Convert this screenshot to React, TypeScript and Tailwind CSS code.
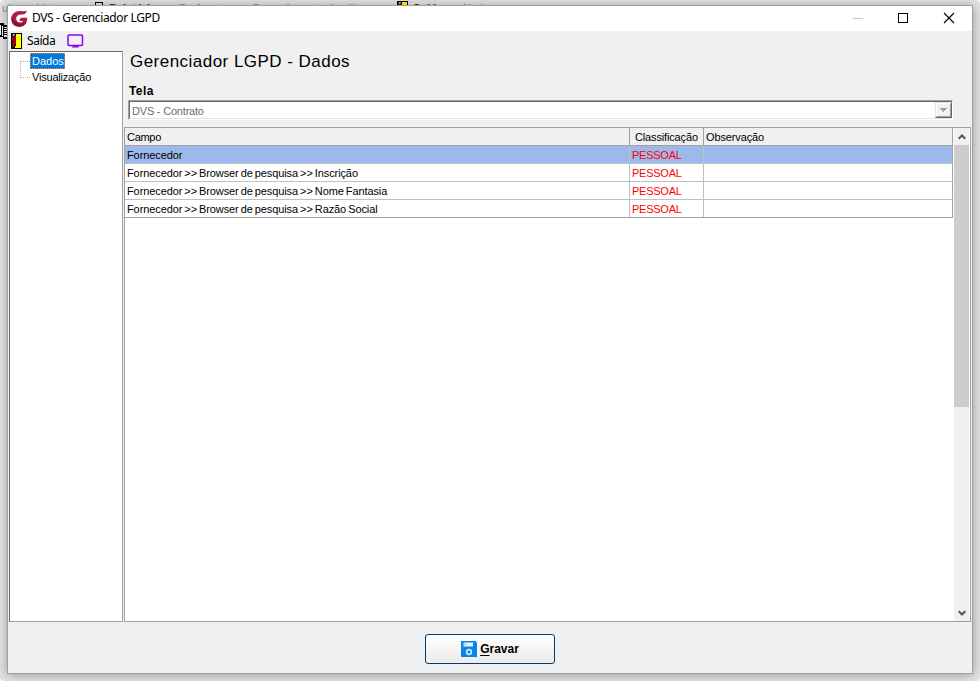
import type { ReactNode } from 'react'

const rows = [
  'Fornecedor',
  'Fornecedor >> Browser de pesquisa >> Inscrição',
  'Fornecedor >> Browser de pesquisa >> Nome Fantasia',
  'Fornecedor >> Browser de pesquisa >> Razão Social',
]

const DoorIcon = ({ className }: { className?: string }) => (
  <svg className={className} width="11" height="16" viewBox="0 0 11 16" shapeRendering="crispEdges">
    <path d="M0 0h11v16H0z" fill="#000" />
    <path d="M5 1h5v14H4v-2h1z" fill="#ff0" />
    <path d="M1 1h3v1h1v9H4v2H3v1H2v1H1z" fill="#8c0010" />
    <path d="M2 1h2v1H3v1H2z" fill="#0ff" />
  </svg>
)

const LogoIcon = () => (
  <svg width="17" height="17" viewBox="0 0 17 17">
    <path
      d="M16 .8C15 4 13 4.600 10.500 4.500 7.500 4.300 5.300 5.800 5.200 8.500c0 2.700 1.800 4 3.700 4 1.500 0 2.500-.6 3-1.600H8.300l1.400-3.200h6.500c.3 5.600-3.200 9-8 9C3.300 16.700.3 13.500.3 9 .3 3.600 4.500.6 9.500.9c2.500.2 4.500.6 6.500-.1z"
      fill="#b11b3c"
    />
    <path d="M.6 6.500C-.4 12.500 3 16.700 8.200 16.700c3.500 0 6-1.700 7.200-4.200C10 15 3.500 13 .6 6.500z" fill="#7f1738" />
  </svg>
)

const MonitorIcon = () => (
  <svg width="17" height="15" viewBox="0 0 17 15">
    <rect x="1" y="1" width="14.500" height="10.500" rx="1" fill="none" stroke="#8c00ff" strokeWidth="1.500" />
    <path d="M6 11.500h5V13H6z" fill="#8c00ff" />
    <path d="M5 13h7" stroke="#8c00ff" />
  </svg>
)

const PagesIcon = () => (
  <svg width="8" height="16" viewBox="0 0 8 16" shapeRendering="crispEdges">
    <path d="M0 0h4v2h3v14H3v-2H0z" fill="#000" />
    <path d="M0 2h1v10H0zM2 3h1v10H2zM4 4h4v1H4zM4 6h4v1H4zM4 8h4v1H4zM4 10h4v1H4zM4 12h4v2H4z" fill="#fff" />
  </svg>
)

const DiskIcon = () => (
  <svg width="16" height="16" viewBox="0 0 16 16">
    <path d="M0 0h14.500L16 2v14H0z" fill="#0883e8" />
    <path d="M2.500 1.500h9.500v4H2.500z" fill="#e8f4ff" />
    <path d="M3.500 2.500h2v2h-2z" fill="#9accf5" />
    <circle cx="8" cy="11" r="2.400" fill="none" stroke="#d2eaff" strokeWidth="1.600" />
  </svg>
)

const Chevron = ({ down }: { down?: boolean }) => (
  <svg width="8" height="6" viewBox="0 0 8 6" className={down ? 'rotate-180' : ''}>
    <path d="M.7 4.800 4 1.500l3.300 3.300" fill="none" stroke="#555" strokeWidth="2" />
  </svg>
)

const Cell = ({ className, children }: { className: string; children?: ReactNode }) => (
  <div className={`h-full shrink-0 whitespace-nowrap pl-[2px] ${className}`}>{children}</div>
)

// menu bar of the parent window, mostly hidden behind the dialog
const Backdrop = () => (
  <div className="absolute inset-x-0 top-0 h-[16px] overflow-hidden text-[11px] leading-[13px] text-[#8c8c8c]">
    <span className="absolute left-[2px] top-[2px]">ultas</span>
    <span className="absolute left-[36px] top-[2px]">Listagens</span>
    <span className="absolute left-[95px] top-[2px] h-3 w-2 border border-black bg-[#eee8d0]" />
    <span className="absolute left-[109px] top-[2px] font-bold text-[#333]">Relatórios</span>
    <span className="absolute left-[179px] top-[2px]">Parâmetros</span>
    <span className="absolute left-[253px] top-[2px]">Procedimentos Auxiliares</span>
    <DoorIcon className="absolute left-[397px] top-[1px]" />
    <span className="absolute left-[413px] top-[2px] font-bold text-[#333]">Saída</span>
    <span className="absolute left-[461px] top-[2px]">Ajuda</span>
  </div>
)

const TitleBar = () => (
  <div className="flex h-[25px] shrink-0 items-center bg-white pl-[3px] text-[12px]">
    <LogoIcon />
    <span className="-mt-px ml-1 whitespace-nowrap font-['Noto_Sans',sans-serif] tracking-[-0.37px]">
      DVS - Gerenciador LGPD
    </span>
    <svg className="-mt-px ml-auto mr-[15px]" width="104" height="12" viewBox="0 0 104 12">
      <path d="M0 6.500h10" stroke="#c8c8c8" />
      <rect x="45.500" y="1.500" width="9" height="9" fill="none" stroke="#000" />
      <path d="m91 1 10 10m0-10L91 11" stroke="#000" strokeWidth="1.100" />
    </svg>
  </div>
)

const Toolbar = () => (
  <div className="flex h-5 shrink-0 items-center pl-[3px] text-[12px]">
    <DoorIcon />
    <span className="ml-[5px] w-[40px] font-['Noto_Sans',sans-serif] tracking-[-0.45px]">Saída</span>
    <MonitorIcon />
  </div>
)

const Tree = () => (
  <div className="flex w-[114px] shrink-0 border border-[#a0a0a0] border-l-[#696969] border-t-[#696969] bg-white">
    <div className="ml-[10px] mt-[9px] h-[17px] w-[10px] shrink-0 border-y border-l border-dotted border-[#b0b0b0]" />
    <div className="mt-px flex flex-col items-start leading-[16px]">
      <span className="h-4 w-[35px] border border-dotted border-[#ff8728] bg-[#0078d7] pl-px leading-[15px] text-white">
        Dados
      </span>
      <span className="pl-[2px] tracking-[-0.2px]">Visualização</span>
    </div>
  </div>
)

const Combo = () => (
  <div className="ml-[4px] mt-[2px] flex h-5 w-[825px] border border-white border-l-[#a0a0a0] border-t-[#a0a0a0] bg-white">
    <div className="flex min-w-0 flex-1 border border-[#e3e3e3] border-l-[#696969] border-r-0 border-t-[#696969]">
      <span className="flex-1 pl-[2px] leading-[19px] tracking-[-0.2px] text-[#6d6d6d]">DVS - Contrato</span>
      <div className="flex w-[17px] border border-[#696969] border-l-[#e3e3e3] border-t-[#e3e3e3] bg-[#f0f0f0]">
        <div className="flex flex-1 items-center justify-center border border-[#a0a0a0] border-l-white border-t-white">
          <svg width="8" height="5" viewBox="0 0 8 5" shapeRendering="crispEdges">
            <path d="M1 1h7v1H7v1H6v1H5v1H4V4H3V3H2V2H1z" fill="#fff" />
            <path d="M0 0h7v1H6v1H5v1H4v1H3V3H2V2H1V1H0z" fill="#a0a0a0" />
          </svg>
        </div>
      </div>
    </div>
  </div>
)

const Grid = () => (
  <div className="mt-[7px] flex min-h-0 flex-1 border border-[#a0a0a0] bg-white">
    <div className="w-[828px] shrink-0">
      <div className="flex h-[18px] border-b border-r border-[#a0a0a0] bg-[#f0f0f0] leading-[18px]">
        <Cell className="w-[505px] border-r border-[#a0a0a0] tracking-[-0.3px]">Campo</Cell>
        <Cell className="w-[74px] border-r border-[#a0a0a0] pl-[5px]! tracking-[-0.15px]">Classificação</Cell>
        <Cell className="flex-1 tracking-[-0.12px]">Observação</Cell>
      </div>
      {rows.map((row, i) => (
        <div
          key={row}
          className={`flex h-[18px] border-b border-r border-b-[#c0c0c0] border-r-[#a0a0a0] leading-[18px] last:border-b-[#a0a0a0] ${
            i === 0 ? 'bg-[#9db8eb]' : ''
          }`}
        >
          <Cell className="w-[505px] border-r border-[#c0c0c0] tracking-[-0.1px] [word-spacing:-0.9px]">{row}</Cell>
          <Cell className="w-[74px] border-r border-[#c0c0c0] tracking-[-0.25px] text-[#f00]">PESSOAL</Cell>
          <Cell className="flex-1" />
        </div>
      ))}
    </div>
    <div className="ml-px flex w-[15px] flex-col items-center bg-[#f0f0f0]">
      <div className="flex h-[17px] items-center pt-px">
        <Chevron />
      </div>
      <div className="h-[262px] w-full bg-[#cdcdcd]" />
      <div className="mt-auto flex h-[17px] items-center">
        <Chevron down />
      </div>
    </div>
  </div>
)

const App = () => (
  <div className="relative h-[681px] w-[980px] overflow-hidden rounded-[4px] bg-[#e4e4e4] pl-[7px] pt-[5px] font-['Liberation_Sans',sans-serif] text-[11px] text-black">
    <Backdrop />
    <div className="absolute left-0 top-[23px]">
      <PagesIcon />
    </div>
    <div className="relative flex h-[669px] w-[966px] flex-col border border-[#a0a0a0] bg-[#f0f0f0] shadow-[0_1px_10px_rgba(0,0,0,0.35)]">
      <TitleBar />
      <Toolbar />
      <div className="flex h-[571px] shrink-0 pl-px">
        <Tree />
        <div className="ml-px flex w-[847px] flex-col">
          <h1 className="ml-[6px] h-[32px] whitespace-nowrap text-[17px] leading-[21px] tracking-[0.47px]">
            Gerenciador LGPD - Dados
          </h1>
          <label className="ml-[5px] h-[15px] text-[12px] font-bold leading-[16px] tracking-[0.4px]">Tela</label>
          <Combo />
          <Grid />
        </div>
      </div>
      <div className="flex flex-1 justify-center pt-[12px]">
        <button className="flex h-[30px] w-[130px] items-center justify-center rounded-[3px] border border-[#003c74] bg-linear-to-b from-white to-[#eeebe8] text-[12px] font-bold">
          <DiskIcon />
          <span className="ml-[3px]">
            <u className="underline-offset-2">G</u>ravar
          </span>
        </button>
      </div>
    </div>
  </div>
)

export default App
